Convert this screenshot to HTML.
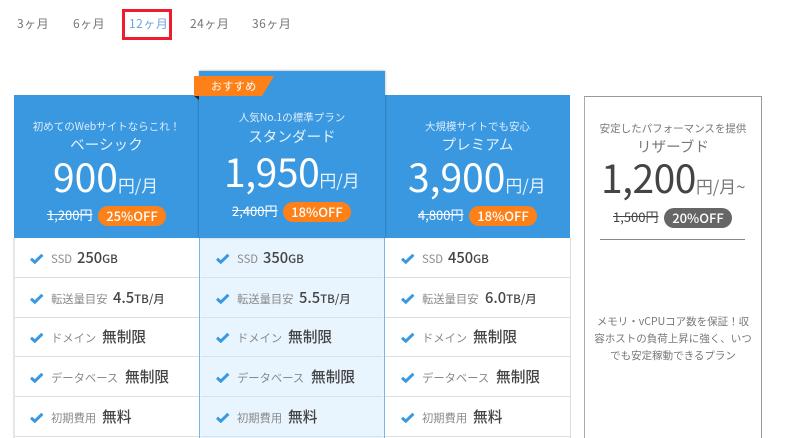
<!DOCTYPE html>
<html lang="ja"><head><meta charset="utf-8">
<style>
html,body{margin:0;padding:0;width:800px;height:438px;overflow:hidden;background:#fff}
body{position:relative;font-family:"Noto Sans CJK JP","Liberation Sans",sans-serif;color:#444}
div,span{box-sizing:border-box}
.a{position:absolute;white-space:nowrap}
.c{text-align:center}
.tab{top:15px;font-size:12px;line-height:18px;color:#777;letter-spacing:.5px}
.blue{position:absolute;background:#3a98e0}
.sub{font-size:10.5px;line-height:16px;color:#dcedfb}
.nm{font-size:14.5px;line-height:20px;color:#e6f2fc;letter-spacing:.1px}
.pr{font-size:39px;line-height:50px;color:#fff;letter-spacing:0}
.pr span{font-size:16.8px;color:#e8f3fc;letter-spacing:0}
.old{font-size:13px;line-height:16px;color:#fff;text-decoration:line-through}
.pill{height:20px;border-radius:10px;background:#fd8019;color:#fff;font-size:13px;line-height:20px;text-align:center;font-weight:500;width:68px}
.l{position:absolute;height:1px;background:#dedede}
.ck{position:absolute;width:14px;height:11px}
.k{font-size:11.3px;line-height:16px;color:#8a8a8a}
.v{font-size:14.7px;line-height:20px;color:#444;font-weight:500}
.v small{font-size:11.5px;font-weight:500}
</style></head><body>
<div class="a tab" style="left:17px">3ヶ月</div>
<div class="a tab" style="left:73px">6ヶ月</div>
<div class="a tab" style="left:129px;color:#6fa5dc">12ヶ月</div>
<div class="a tab" style="left:190px">24ヶ月</div>
<div class="a tab" style="left:252px">36ヶ月</div>
<div class="a" style="left:122px;top:9px;width:50px;height:31px;border:3px solid #ee1c2e"></div>

<!-- table side borders -->
<div class="a" style="left:13px;top:238px;width:2px;height:200px;background:#e6e6e6"></div>
<div class="a" style="left:570px;top:238px;width:1px;height:200px;background:#dcdcdc"></div>

<!-- blue headers -->
<div class="blue" style="left:14px;top:95px;width:186px;height:143px"></div>
<div class="blue" style="left:385px;top:95px;width:185px;height:143px"></div>

<!-- row lines -->
<div class="l" style="left:15px;top:277px;width:555px"></div>
<div class="l" style="left:15px;top:317px;width:555px"></div>
<div class="l" style="left:15px;top:356px;width:555px"></div>
<div class="l" style="left:15px;top:396px;width:555px"></div>
<div class="l" style="left:15px;top:436px;width:555px"></div>

<!-- featured column -->
<div class="a" style="left:199px;top:238px;width:186px;height:200px;background:#e8f4fe;border-left:1.5px solid #7db5de;border-right:1.5px solid #7db5de"></div>
<div class="l" style="left:201px;top:277px;width:182px;background:#d5e3ee"></div>
<div class="l" style="left:201px;top:317px;width:182px;background:#d5e3ee"></div>
<div class="l" style="left:201px;top:356px;width:182px;background:#d5e3ee"></div>
<div class="l" style="left:201px;top:396px;width:182px;background:#d5e3ee"></div>
<div class="l" style="left:201px;top:436px;width:182px;background:#d5e3ee"></div>
<div class="a" style="left:199px;top:71px;width:186px;height:167px;background:#3a98e0;box-shadow:0 -1px 2px rgba(0,0,0,.12),1px 0 2px rgba(0,0,0,.1),-1px 0 2px rgba(0,0,0,.1)"></div>

<!-- ribbon -->
<div class="a" style="left:194px;top:96px;width:5px;height:4px;background:#223;clip-path:polygon(0 0,100% 0,100% 100%)"></div>
<svg class="a" style="left:194px;top:76px" width="80" height="21"><polygon points="0,0 80,0 68,20 0,20" fill="#fd8019"/></svg>
<div class="a" style="left:211px;top:78px;font-size:11px;line-height:17px;color:#fff;letter-spacing:.4px">おすすめ</div>

<!-- col 1 -->
<div class="a c sub" style="left:14px;width:185px;top:119px">初めてのWebサイトならこれ！</div>
<div class="a c nm" style="left:14px;width:185px;top:135px">ベーシック</div>
<div class="a pr" style="left:53px;top:151px">900<span>円/月</span></div>
<div class="a old" style="left:47px;top:207px">1,200円</div>
<div class="a pill" style="left:98px;top:206px">25%OFF</div>

<!-- col 2 -->
<div class="a c sub" style="left:199px;width:186px;top:110px">人気No.1の標準プラン</div>
<div class="a c nm" style="left:199px;width:186px;top:127px">スタンダード</div>
<div class="a pr" style="left:224px;top:146px;letter-spacing:-.4px">1,950<span>円/月</span></div>
<div class="a old" style="left:232px;top:203px">2,400円</div>
<div class="a pill" style="left:283px;top:202px">18%OFF</div>

<!-- col 3 -->
<div class="a c sub" style="left:385px;width:185px;top:119px">大規模サイトでも安心</div>
<div class="a c nm" style="left:385px;width:185px;top:135px">プレミアム</div>
<div class="a pr" style="left:408px;top:151px">3,900<span>円/月</span></div>
<div class="a old" style="left:418px;top:207px">4,800円</div>
<div class="a pill" style="left:469px;top:206px">18%OFF</div>

<!-- col 4 -->
<div class="a" style="left:584px;top:96px;width:178px;height:342px;border:1px solid #999;border-left:1.5px solid #aaa;border-bottom:0"></div>
<div class="a c sub" style="left:584px;width:178px;top:121px;color:#777">安定したパフォーマンスを提供</div>
<div class="a c nm" style="left:584px;width:178px;top:137px;color:#777">リザーブド</div>
<div class="a pr" style="left:601px;top:152px;color:#444;letter-spacing:-.5px">1,200<span style="color:#777">円/月~</span></div>
<div class="a old" style="left:613px;top:209px;color:#444">1,500円</div>
<div class="a pill" style="left:664px;top:208px;background:#666">20%OFF</div>
<div class="a" style="left:600px;top:239px;width:145px;height:1px;background:#888"></div>
<div class="a c" style="left:588px;width:170px;top:313px;font-size:10.5px;line-height:17px;color:#777">メモリ・vCPUコア数を保証！収<br>容ホストの負荷上昇に強く、いつ<br>でも安定稼動できるプラン</div>

<!-- checks -->
<svg width="0" height="0" style="position:absolute"><defs><path id="ck" d="M1 5.8L4.8 9.2 12.4 1.8" fill="none" stroke="#3a98e0" stroke-width="3"/></defs></svg>
<svg class="ck" style="left:30px;top:253px"><use href="#ck"/></svg>
<svg class="ck" style="left:30px;top:293px"><use href="#ck"/></svg>
<svg class="ck" style="left:30px;top:332px"><use href="#ck"/></svg>
<svg class="ck" style="left:30px;top:372px"><use href="#ck"/></svg>
<svg class="ck" style="left:30px;top:412px"><use href="#ck"/></svg>
<svg class="ck" style="left:216px;top:253px"><use href="#ck"/></svg>
<svg class="ck" style="left:216px;top:293px"><use href="#ck"/></svg>
<svg class="ck" style="left:216px;top:332px"><use href="#ck"/></svg>
<svg class="ck" style="left:216px;top:372px"><use href="#ck"/></svg>
<svg class="ck" style="left:216px;top:412px"><use href="#ck"/></svg>
<svg class="ck" style="left:401px;top:253px"><use href="#ck"/></svg>
<svg class="ck" style="left:401px;top:293px"><use href="#ck"/></svg>
<svg class="ck" style="left:401px;top:332px"><use href="#ck"/></svg>
<svg class="ck" style="left:401px;top:372px"><use href="#ck"/></svg>
<svg class="ck" style="left:401px;top:412px"><use href="#ck"/></svg>

<!-- rows col1 -->
<div class="a k" style="left:51px;top:251px">SSD</div><div class="a v" style="left:77px;top:248px">250<small>GB</small></div>
<div class="a k" style="left:51px;top:291px">転送量目安</div><div class="a v" style="left:113px;top:288px">4.5<small>TB/月</small></div>
<div class="a k" style="left:51px;top:330px">ドメイン</div><div class="a v" style="left:102px;top:327px">無制限</div>
<div class="a k" style="left:51px;top:370px">データベース</div><div class="a v" style="left:125px;top:367px">無制限</div>
<div class="a k" style="left:51px;top:410px">初期費用</div><div class="a v" style="left:102px;top:407px">無料</div>
<!-- rows col2 -->
<div class="a k" style="left:237px;top:251px">SSD</div><div class="a v" style="left:263px;top:248px">350<small>GB</small></div>
<div class="a k" style="left:237px;top:291px">転送量目安</div><div class="a v" style="left:299px;top:288px">5.5<small>TB/月</small></div>
<div class="a k" style="left:237px;top:330px">ドメイン</div><div class="a v" style="left:288px;top:327px">無制限</div>
<div class="a k" style="left:237px;top:370px">データベース</div><div class="a v" style="left:311px;top:367px">無制限</div>
<div class="a k" style="left:237px;top:410px">初期費用</div><div class="a v" style="left:288px;top:407px">無料</div>
<!-- rows col3 -->
<div class="a k" style="left:422px;top:251px">SSD</div><div class="a v" style="left:448px;top:248px">450<small>GB</small></div>
<div class="a k" style="left:422px;top:291px">転送量目安</div><div class="a v" style="left:485px;top:288px">6.0<small>TB/月</small></div>
<div class="a k" style="left:422px;top:330px">ドメイン</div><div class="a v" style="left:473px;top:327px">無制限</div>
<div class="a k" style="left:422px;top:370px">データベース</div><div class="a v" style="left:496px;top:367px">無制限</div>
<div class="a k" style="left:422px;top:410px">初期費用</div><div class="a v" style="left:473px;top:407px">無料</div>
</body></html>
